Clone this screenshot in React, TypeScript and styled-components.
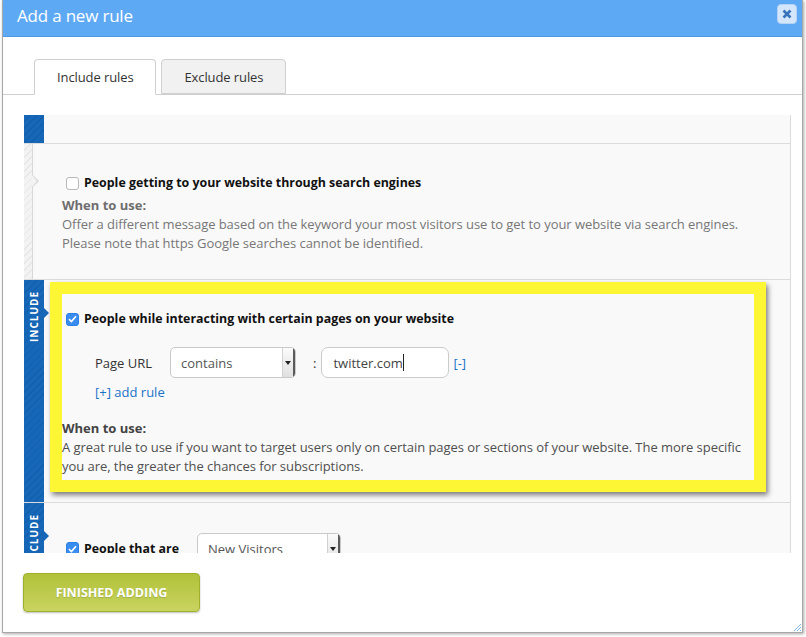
import React from "react";
import styled, { createGlobalStyle, css } from "styled-components";

const GlobalStyle = createGlobalStyle`
  html, body {
    margin: 0;
    padding: 0;
    background: #fff;
  }
  * {
    box-sizing: border-box;
  }
  body {
    font-family: "Open Sans", "Liberation Sans", sans-serif;
    font-size: 13px;
    color: #333;
  }
`;

const Page = styled.div`
  width: 806px;
  height: 637px;
  padding: 0 3px 4px 2px;
  background: #fff;
`;

const Dialog = styled.div`
  position: relative;
  height: 633px;
  border: 1px solid #a8a8a8;
  border-top: none;
  background: #fff;
  box-shadow: 1px 1px 3px rgba(0, 0, 0, 0.35);
  display: flex;
  flex-direction: column;
`;

const Header = styled.div`
  height: 37px;
  flex: none;
  background: #5ea9f4;
  border-bottom: 1px solid #4d97e2;
  display: flex;
  align-items: flex-start;
  justify-content: space-between;
  padding: 4px 5px 0 14px;
`;

const Title = styled.div`
  color: #fff;
  font-size: 17px;
  line-height: 24px;
  letter-spacing: -0.2px;
`;

const CloseButton = styled.button`
  width: 20px;
  height: 20px;
  padding: 0;
  border: 1px solid #b6d3f5;
  border-radius: 4px;
  background: #d3e6fc;
  display: flex;
  align-items: center;
  justify-content: center;
  cursor: pointer;
`;

const Body = styled.div`
  flex: 1;
  display: flex;
  flex-direction: column;
  padding-top: 22px;
`;

const TabBar = styled.div`
  display: flex;
  gap: 5px;
  height: 36px;
  padding-left: 31px;
  border-bottom: 1px solid #cfcfcf;
`;

const Tab = styled.div<{ $active?: boolean }>`
  height: 36px;
  padding: 0 22px;
  display: flex;
  align-items: center;
  border: 1px solid #cfcfcf;
  border-radius: 4px 4px 0 0;
  color: #333;
  font-size: 13px;
  letter-spacing: -0.1px;
  ${(p) =>
    p.$active
      ? css`
          background: #fff;
          border-bottom-color: #fff;
        `
      : css`
          background: #f1f1f1;
          height: 35px;
        `}
`;

const Panel = styled.div`
  padding: 20px 11px 0 21px;
`;

const List = styled.div`
  height: 438px;
  overflow: hidden;
  background: #f9f9f9;
  border-right: 1px solid #dcdcdc;
`;

const Item = styled.div<{ $height?: number }>`
  display: flex;
  border-bottom: 1px solid #dcdcdc;
  ${(p) =>
    p.$height &&
    css`
      height: ${p.$height}px;
    `}
`;

const Strip = styled.div<{ $active?: boolean; $noArrow?: boolean }>`
  position: relative;
  flex: none;
  display: flex;
  justify-content: center;
  align-items: flex-start;
  padding-top: 11px;
  ${(p) =>
    p.$active
      ? css`
          width: 20px;
          background: repeating-linear-gradient(
            135deg,
            #1767b9 0,
            #1767b9 4px,
            #125fae 4px,
            #125fae 5px
          );
          &::after {
            content: "";
            position: absolute;
            right: -5px;
            top: 28px;
            border-top: 5px solid transparent;
            border-bottom: 5px solid transparent;
            border-left: 5px solid #1767b9;
            display: ${p.$noArrow ? "none" : "block"};
          }
        `
      : css`
          width: 9px;
          margin-right: 11px;
          background: repeating-linear-gradient(
            135deg,
            #f3f3f3 0,
            #f3f3f3 4px,
            #e7e7e7 4px,
            #e7e7e7 5px
          );
          border-right: 1px solid #d8d8d8;
          &::before,
          &::after {
            content: "";
            position: absolute;
            top: 31px;
            border-top: 6px solid transparent;
            border-bottom: 6px solid transparent;
          }
          &::before {
            right: -7px;
            border-left: 6px solid #d8d8d8;
          }
          &::after {
            right: -5px;
            border-left: 5px solid #f3f3f3;
          }
        `}
`;

const StripLabel = styled.span`
  writing-mode: vertical-rl;
  transform: rotate(180deg);
  color: #fff;
  font-size: 10px;
  font-weight: 700;
  letter-spacing: 1px;
  line-height: 12px;
`;

const ItemBody = styled.div`
  flex: 1;
  padding: 2px 24px 10px 6px;
`;

const Frame = styled.div<{ $highlight?: boolean }>`
  border: 12px solid ${(p) => (p.$highlight ? "#fcf634" : "transparent")};
  padding: 16px 0 4px 0;
  background: #f9f9f9;
  color: ${(p) => (p.$highlight ? "#4f4f4f" : "#777")};
  ${(p) =>
    p.$highlight &&
    css`
      box-shadow: 2px 3px 5px rgba(0, 0, 0, 0.5);
    `}
`;

const RuleRow = styled.div`
  display: flex;
  align-items: center;
  gap: 5px;
  margin-left: 4px;
  min-height: 18px;
`;

const CheckBox = styled.span<{ $checked?: boolean }>`
  width: 13px;
  height: 13px;
  flex: none;
  border-radius: 3px;
  display: inline-flex;
  align-items: center;
  justify-content: center;
  border: 1px solid ${(p) => (p.$checked ? "#2b7fe3" : "#b9b9b9")};
  background: ${(p) => (p.$checked ? "#3a8df0" : "#fff")};
`;

const RuleName = styled.span`
  font-weight: 700;
  color: #111;
  font-size: 12.4px;
  line-height: 18px;
`;

const WhenLabel = styled.div<{ $dark?: boolean }>`
  margin-top: ${(p) => (p.$dark ? 18 : 4)}px;
  font-weight: 700;
  line-height: 19px;
  color: ${(p) => (p.$dark ? "#444" : "#6e6e6e")};
`;

const Description = styled.div`
  line-height: 19px;
  letter-spacing: -0.05px;
`;

const FieldRow = styled.div`
  display: flex;
  align-items: center;
  margin: 19px 0 0 33px;
`;

const FieldLabel = styled.span`
  width: 75px;
  color: #333;
`;

const Select = styled.div<{ $width: number }>`
  width: ${(p) => p.$width}px;
  height: 31px;
  flex: none;
  display: flex;
  align-items: stretch;
  border: 1px solid #c9c9c9;
  border-radius: 5px;
  background: #fff;
  overflow: hidden;
`;

const SelectValue = styled.span`
  flex: 1;
  display: flex;
  align-items: center;
  padding-left: 10px;
  color: #555;
`;

const SelectArrow = styled.span`
  width: 13px;
  display: flex;
  align-items: center;
  justify-content: center;
  background: linear-gradient(#fbfbfb, #e0e0e0);
  border-left: 1px solid #d2d2d2;
  border-right: 2px solid #5a5a5a;
  &::after {
    content: "";
    border-left: 3px solid transparent;
    border-right: 3px solid transparent;
    border-top: 4px solid #222;
  }
`;

const Colon = styled.span`
  padding: 0 5px 0 17px;
  color: #333;
`;

const TextInput = styled.div`
  width: 128px;
  height: 31px;
  display: flex;
  align-items: center;
  padding-left: 11px;
  border: 1px solid #cbcbcb;
  border-radius: 7px;
  background: #fff;
  color: #444;
`;

const Caret = styled.span`
  width: 1px;
  height: 17px;
  background: #222;
`;

const Link = styled.a<{ $indent?: boolean }>`
  color: #1a72c6;
  text-decoration: none;
  line-height: 18px;
  ${(p) =>
    p.$indent &&
    css`
      display: block;
      margin: 5px 0 0 33px;
    `}
`;

const RemoveLink = styled(Link)`
  margin-left: 4px;
`;

const VisitorRow = styled(RuleRow)`
  gap: 0;
`;

const VisitorName = styled(RuleName)`
  margin: 0 18px 0 5px;
`;

const Footer = styled.div`
  padding: 20px 0 0 20px;
`;

const FinishButton = styled.button`
  width: 177px;
  height: 39px;
  border: 1px solid #9fb02b;
  border-radius: 4px;
  background: linear-gradient(#b2c13a, #c8d460);
  box-shadow: 0 1px 2px rgba(0, 0, 0, 0.25);
  color: #fff;
  font-family: "Open Sans", "Liberation Sans", sans-serif;
  font-size: 12.5px;
  font-weight: 700;
  text-shadow: 0 1px 1px rgba(0, 0, 0, 0.15);
  cursor: pointer;
`;

const Grip = styled.svg`
  position: absolute;
  right: 0;
  bottom: 0;
`;

const Check = () => (
  <svg width="9" height="8" viewBox="0 0 9 8">
    <path d="M1 4.2 L3.4 6.5 L8 1.2" stroke="#fff" strokeWidth="1.6" fill="none" />
  </svg>
);

export default function App() {
  return (
    <Page>
      <GlobalStyle />
      <Dialog>
        <Header>
          <Title>Add a new rule</Title>
          <CloseButton aria-label="close">
            <svg width="10" height="10" viewBox="0 0 10 10">
              <path d="M1.5 1.5 L8.5 8.5 M8.5 1.5 L1.5 8.5" stroke="#3673bb" strokeWidth="2.6" />
            </svg>
          </CloseButton>
        </Header>
        <Body>
          <TabBar>
            <Tab $active>Include rules</Tab>
            <Tab>Exclude rules</Tab>
          </TabBar>
          <Panel>
            <List>
              <Item $height={29}>
                <Strip $active $noArrow />
                <ItemBody />
              </Item>

              <Item>
                <Strip />
                <ItemBody>
                  <Frame>
                    <RuleRow>
                      <CheckBox />
                      <RuleName>People getting to your website through search engines</RuleName>
                    </RuleRow>
                    <WhenLabel>When to use:</WhenLabel>
                    <Description>
                      Offer a different message based on the keyword your most visitors use to get to your
                      website via search engines.
                      <br />
                      Please note that https Google searches cannot be identified.
                    </Description>
                  </Frame>
                </ItemBody>
              </Item>

              <Item>
                <Strip $active>
                  <StripLabel>INCLUDE</StripLabel>
                </Strip>
                <ItemBody>
                  <Frame $highlight>
                    <RuleRow>
                      <CheckBox $checked>
                        <Check />
                      </CheckBox>
                      <RuleName>People while interacting with certain pages on your website</RuleName>
                    </RuleRow>
                    <FieldRow>
                      <FieldLabel>Page URL</FieldLabel>
                      <Select $width={126}>
                        <SelectValue>contains</SelectValue>
                        <SelectArrow />
                      </Select>
                      <Colon>:</Colon>
                      <TextInput>
                        twitter.com
                        <Caret />
                      </TextInput>
                      <RemoveLink href="#">[-]</RemoveLink>
                    </FieldRow>
                    <Link href="#" $indent>
                      [+] add rule
                    </Link>
                    <WhenLabel $dark>When to use:</WhenLabel>
                    <Description>
                      A great rule to use if you want to target users only on certain pages or sections of your
                      website. The more specific you are, the greater the chances for subscriptions.
                    </Description>
                  </Frame>
                </ItemBody>
              </Item>

              <Item>
                <Strip $active>
                  <StripLabel>INCLUDE</StripLabel>
                </Strip>
                <ItemBody>
                  <Frame>
                    <VisitorRow>
                      <CheckBox $checked>
                        <Check />
                      </CheckBox>
                      <VisitorName>People that are</VisitorName>
                      <Select $width={144}>
                        <SelectValue>New Visitors</SelectValue>
                        <SelectArrow />
                      </Select>
                    </VisitorRow>
                  </Frame>
                </ItemBody>
              </Item>
            </List>
          </Panel>
          <Footer>
            <FinishButton>FINISHED ADDING</FinishButton>
          </Footer>
        </Body>
        <Grip width="9" height="9" viewBox="0 0 9 9">
          <path d="M8 1 L1 8 M8 4 L4 8 M8 7 L7 8" stroke="#7fb4ec" strokeWidth="1" />
        </Grip>
      </Dialog>
    </Page>
  );
}
